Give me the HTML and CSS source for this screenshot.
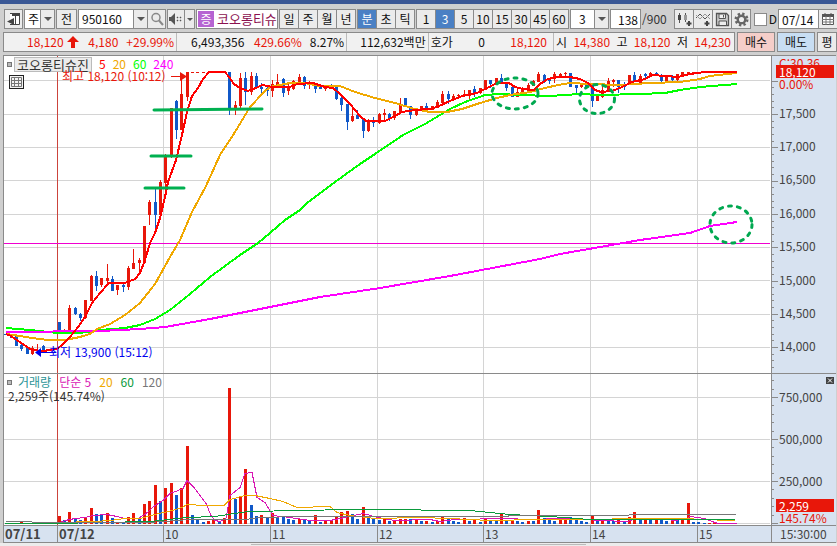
FILE: index.html
```html
<!DOCTYPE html>
<html lang="ko">
<head>
<meta charset="utf-8">
<title>코오롱티슈진 분봉 차트</title>
<link rel="stylesheet" href="styles.css">
</head>
<body>
<div class="titlebar"></div>
<header class="toolbar">
  <button class="btn w19" aria-label="패널"><svg width="14" height="14" viewBox="0 0 14 14"><path d="M3 1.500H12.500V12.500H3" fill="#fff" stroke="#444"/><path d="M5 1h8v3H5zM8 4h1v9H8zM7 6v7L0 9.500z" fill="#444"/></svg></button>
  <div class="combo w31"><select aria-label="구분"><option>주</option></select><i class="arrow"></i></div>
  <button class="btn w21">전</button>
  <div class="group">
    <div class="combo w70"><input type="text" value="950160" aria-label="종목코드"><i class="arrow"></i></div>
    <button class="btn w19" aria-label="검색"><svg width="14" height="14" viewBox="0 0 14 14"><circle cx="6" cy="5.500" r="4" fill="none" stroke="#888" stroke-width="1.500"/><path d="M9 8.500l4 4.500" stroke="#888" stroke-width="2"/></svg></button>
  </div>
  <div class="group">
    <button class="btn w18" aria-label="소리"><svg width="14" height="14" viewBox="0 0 14 14"><path d="M0 5h2L6 1v12L2 9H0z" fill="#555"/><path d="M8 5h1v1H8zM8 8h1v1H8zM11 5h1v1h-1zM11 8h1v1h-1z" stroke="#555" fill="#555" stroke-width=".5"/></svg></button>
    <button class="btn w11" aria-label="소리 목록"><i class="tri"></i></button>
  </div>
  <div class="stock"><span class="badge">증</span><span class="stock-name">코오롱티슈</span></div>
  <div class="group">
    <button class="btn w20">일</button><button class="btn w20">주</button><button class="btn w20">월</button><button class="btn w20">년</button>
  </div>
  <div class="group">
    <button class="btn w20 on">분</button><button class="btn w20">초</button><button class="btn w20">틱</button>
  </div>
  <div class="group">
    <button class="btn w20">1</button><button class="btn w20 on">3</button><button class="btn w20">5</button><button class="btn w20">10</button><button class="btn w20">15</button><button class="btn w20">30</button><button class="btn w20">45</button><button class="btn w20">60</button>
  </div>
  <div class="combo w39 num"><select aria-label="분 단위"><option>3</option></select><i class="arrow"></i></div>
  <div class="count"><input type="text" value="138" aria-label="표시 개수"><span>/900</span></div>
  <div class="group">
    <button class="btn w20" aria-label="차트 추가"><svg width="15" height="15" viewBox="0 0 15 15"><path d="M2.500 1v10M8.500 1v9" stroke="#555"/><path d="M1 3h3v5H1z" fill="#444"/><path d="M7 3h3v5H7z" fill="#999"/><path d="M12 9v5M9.500 11.500h5" stroke="#444" stroke-width="2"/></svg></button><button class="btn w20" aria-label="지표 추가"><svg width="15" height="15" viewBox="0 0 15 15"><path d="M0 6l4-4 5 5 5-5" fill="none" stroke="#555"/><path d="M0 3l4 4 5-5 5 5" fill="none" stroke="#999"/><path d="M11 9v5M8.500 11.500h5" stroke="#444" stroke-width="2"/></svg></button><button class="btn w20" aria-label="저장"><svg width="15" height="15" viewBox="0 0 15 15"><path d="M1.500 1.500h10l2 2v10h-12z" fill="#ccc" stroke="#555" stroke-width="1.300"/><path d="M4 2h6.500v4.500H4zM4 9h7.500v4.500H4z" fill="#eee" stroke="#555"/><path d="M8.500 3v2.500" stroke="#555"/></svg></button><button class="btn w20" aria-label="설정"><svg width="15" height="15" viewBox="0 0 15 15"><circle cx="7.500" cy="7.500" r="5.500" fill="none" stroke="#666" stroke-width="3" stroke-dasharray="2.200 2.120"/><circle cx="7.500" cy="7.500" r="3.800" fill="#eee" stroke="#666" stroke-width="2.500"/></svg></button>
  </div>
  <label class="check"><input type="checkbox"><span>D</span></label>
  <div class="date"><input type="text" value="07/14" aria-label="날짜"><button class="btn w20" aria-label="달력"><svg width="12" height="12" viewBox="0 0 12 12"><path d="M.5 1.500h11v10H.5z" fill="#fff" stroke="#555"/><path d="M0 1h12v3H0z" fill="#555"/><path d="M0 6.500h12M0 9h12M4 3v9M8 3v9" stroke="#777"/><path d="M3 0v2M9 0v2" stroke="#555"/></svg></button></div>
</header>

<section class="quote">
  <div class="cells">
    <div class="cell"><b class="up first">18,120</b><svg class="uparrow" width="12" height="12" viewBox="0 0 12 12"><path d="M6 0l6 6H8v6H4V6H0z" fill="#e8170a"/></svg><span class="up end">4,180</span><span class="up pct">+29.99%</span></div>
    <div class="cell"><span class="n wide">6,493,356</span><span class="up end">429.66%</span><span class="n pct">8.27%</span></div>
    <div class="cell"><span class="n end">112,632백만</span></div>
    <div class="cell book"><span>호가</span><span>0</span><span class="up">18,120</span></div>
    <div class="cell ohl"><span>시</span><span class="up">14,380</span><span>고</span><span class="up">18,120</span><span>저</span><span class="up">14,230</span></div>
  </div>
  <button class="trade buy">매수</button>
  <button class="trade sell">매도</button>
  <button class="trade avg">평</button>
</section>

<main class="chart">
  <div class="pane price">
    <svg id="price" class="plot" viewBox="4 56 767 317" preserveAspectRatio="none"></svg>
    <div class="legend"><i class="sq"></i><button class="name">코오롱티슈진</button><span class="c5">5</span><span class="c20">20</span><span class="c60">60</span><span class="c240">240</span></div>
    <button class="gridbtn" aria-label="표"><svg width="11" height="10" viewBox="0 0 11 10"><path d="M.5.500h10v9H.5zM.5 3.500h10M.5 6.500h10M3.500.500v9M7.500.500v9" fill="none" stroke="#777"/></svg></button>
    <span class="note high">최고 18,120 (10:12)</span>
    <span class="note low">최저 13,900 (15:12)</span>
  </div>
  <aside class="axis price-axis">
    <svg id="priceTicks" class="ticks" viewBox="0 56 10 317" preserveAspectRatio="none"></svg>
    <div class="now"><span class="c">C:30.36</span><b>18,120</b><span>0.00%</span></div>
    <ol><li>17,500</li><li>17,000</li><li>16,500</li><li>16,000</li><li>15,500</li><li>15,000</li><li>14,500</li><li>14,000</li></ol>
  </aside>
  <div class="pane volume">
    <svg id="volume" class="plot" viewBox="4 374 767 151" preserveAspectRatio="none"></svg>
    <div class="legend"><i class="sq"></i><span class="vt">거래량</span><span class="v5">단순 5</span><span class="c20">20</span><span class="v60">60</span><span class="v120">120</span></div>
    <div class="vol-now">2,259주(145.74%)</div>
  </div>
  <aside class="axis volume-axis">
    <svg id="volTicks" class="ticks" viewBox="0 374 10 151" preserveAspectRatio="none"></svg>
    <button class="close" aria-label="닫기"><svg width="8" height="7" viewBox="0 0 8 7"><path d="M2 1.500l4 4M6 1.500l-4 4" stroke="#fff"/></svg></button>
    <ol><li>750,000</li><li>500,000</li><li>250,000</li></ol>
    <div class="now"><b>2,259</b><span>145.74%</span></div>
  </aside>
  <div class="times"><b>07/11</b><b>07/12</b><span>10</span><span>11</span><span>12</span><span>13</span><span>14</span><span>15</span></div>
  <div class="clock">15:30:00</div>
</main>
<div class="bottom"><i></i></div>
<script src="chart.js"></script>
</body>
</html>
```
FILE: styles.css
```css
* { box-sizing: border-box; }
html, body { height: 100%; }
body {
  margin: 0; display: flex; flex-direction: column; overflow: hidden;
  background: #cfcfcf; color: #111;
  font: 12px/14px "Noto Sans CJK KR", sans-serif;
}
button, input, select { font: inherit; color: inherit; margin: 0; padding: 0; border-radius: 0; }
i { font-style: normal; }
b { font-weight: normal; }
.titlebar { height: 4px; flex: none; background: #3a5795; }

.toolbar { flex: none; height: 28px; padding: 5px 0 3px 4px; display: flex; gap: 1px; white-space: nowrap; }
.toolbar > * { flex: none; }
.group { display: flex; }
.btn { display: flex; align-items: center; justify-content: center; height: 20px; border: 1px solid #8a8a8a; background: #ebebeb; overflow: hidden; }
.group > * + * { margin-left: -1px; }
.btn.on { background: #4a80c4; color: #fff; }
.w11 { width: 11px; } .w18 { width: 18px; } .w19 { width: 19px; } .w20 { width: 20px; } .w21 { width: 21px; }
.w31 { width: 31px; } .w39 { width: 39px; } .w70 { width: 70px; }
.combo { display: flex; height: 20px; border: 1px solid #8a8a8a; background: #fff; }
.combo select, .combo input { appearance: none; flex: 1; min-width: 0; width: 0; border: 0; background: none; padding-left: 3px; outline: 0; }
.combo.num select { padding-left: 8px; }
.arrow { width: 14px; background: #ebebeb; border-left: 1px solid #8a8a8a; display: flex; align-items: center; justify-content: center; pointer-events: none; }
.arrow::after, .tri { content: ""; border: 4px solid transparent; border-top-color: #555; border-bottom: 0; }
.tri { border-width: 3px 3px 0; }
.stock { display: flex; align-items: center; width: 82px; height: 20px; border: 1px solid #8a8a8a; background: #fff; padding-left: 1px; overflow: hidden; color: #8b1150; }
.badge { width: 16px; height: 16px; line-height: 16px; text-align: center; color: #fff; background: #b663d2; margin-right: 3px; flex: none; }
.stock-name { font-size: 13px; }
.count { display: flex; align-items: center; width: 63px; color: #333; }
.count input { width: 31px; height: 20px; border: 1px solid #8a8a8a; background: #fff; text-align: right; padding-right: 2px; color: #111; margin-right: 1px; }
.check { display: flex; align-items: center; gap: 2px; width: 25px; padding-left: 2px; }
.check input { appearance: none; width: 13px; height: 13px; background: #fff; border: 1px solid #8a8a8a; }
.date { display: flex; }
.date input { width: 40px; height: 20px; border: 1px solid #8a8a8a; border-right: 0; background: #fff; padding-left: 3px; }

.quote { flex: none; height: 20px; display: flex; gap: 2px; padding-left: 3px; line-height: 18px; }
.cells { flex: 1; display: grid; grid-template-columns: 173fr 171fr 82fr 126fr 182fr; border: 1px solid #8a8a8a; background: #f1f1f1; }
.cell { display: flex; align-items: center; min-width: 0; padding: 0 2px; white-space: nowrap; }
.cell + .cell { border-left: 1px solid #bbb; }
.up { color: #e8170a; }
.cell .end { margin-left: auto; }
.pct { margin-left: 8px; }
.first { margin-left: 21px; }
.uparrow { margin-left: 3px; }
.wide { margin-left: 12px; }
.book, .ohl { justify-content: space-between; }
.book { padding-right: 6px; }
.ohl { padding-right: 3px; }
.trade { border: 1px solid #8a8a8a; line-height: 16px; height: 20px; }
.buy { width: 38px; background: #f5cec9; }
.sell { width: 38px; background: #c8def3; }
.avg { width: 20px; background: #ebebeb; }

.chart {
  flex: 1; min-height: 0; margin: 3px 1px 0 3px; border: 1px solid #8a8a8a; border-right: 0; border-bottom: 0; background: #fff;
  display: grid; grid-template-columns: 1fr 65px; grid-template-rows: 318fr 151fr 18px;
}
.pane { position: relative; min-height: 0; min-width: 0; overflow: hidden; }
.price, .price-axis { border-bottom: 1px solid #8a8a8a; }
.plot { position: absolute; inset: 0; width: 100%; height: 100%; }
.legend { position: relative; display: flex; align-items: center; padding-left: 3px; height: 16px; }
.sq { width: 5px; height: 5px; background: #bbb; border: 1px solid #777; }
.name { margin-left: 2px; width: 78px; height: 15px; line-height: 13px; font-size: 13px; border: 1px solid #bbb; background: #ececec; color: #333; }
.price .legend span { margin-left: 7px; }
.c5 { color: #f00; } .c20 { color: #f0a800; } .c60 { color: #0f0; } .c240 { color: #f0f; }
.vt { color: #2a9496; } .v5 { color: #d916b4; } .v60 { color: #0a9a3c; } .v120 { color: #777; }
.volume .legend { gap: 8px; } .volume .sq { margin-right: -2px; }
.vol-now { position: relative; padding-left: 4px; line-height: 11px; color: #333; }
.gridbtn { position: absolute; left: 5px; top: 19px; width: 15px; height: 14px; background: #f4f4f4; border: 1px solid #222; display: flex; align-items: center; justify-content: center; }
.note { position: absolute; white-space: nowrap; }
.high { left: 58px; top: 13px; color: #e8170a; }
.low { left: 45px; top: 289px; color: #00e; }

.axis { position: relative; background: #d7e2f0; color: #444; border-left: 1px solid #8a8a8a; display: flex; flex-direction: column; min-height: 0; overflow: hidden; }
.ticks { position: absolute; left: 0; top: 0; width: 10px; height: 100%; }
.axis ol { list-style: none; margin: 0; padding: 0 0 0 7px; flex: 1; display: flex; flex-direction: column; }
.axis li { flex: 1; display: flex; align-items: center; }
.price-axis ol { padding-top: 40px; padding-bottom: 10px; }
.volume-axis ol { padding-top: 2px; padding-bottom: 23px; }
.now { position: absolute; left: 4px; right: 2px; display: flex; flex-direction: column; color: #e8170a; line-height: 12px; }
.now b { background: #e8170a; color: #fff; padding-left: 3px; line-height: 13px; z-index: 1; }
.now span { padding-left: 3px; }
.price-axis .now { top: 1px; }
.now .c { height: 8px; }
.volume-axis .now { bottom: 1px; }
.close { position: absolute; right: 2px; top: 3px; width: 8px; height: 7px; background: #444; border: 0; display: flex; }
.times { display: grid; grid-template-columns: 53fr 106fr 107fr 107fr 106fr 107fr 107fr 74fr; background: #d7e2f0; color: #444; border: solid #8a8a8a; border-width: 1px 0; line-height: 15px; }
.times > * { padding-left: 1px; min-width: 0; }
.times > * + * { border-left: 1px solid #8a8a8a; }
.times b { font-weight: bold; font-size: 13px; }
.clock { background: #d7e2f0; border: 1px solid #8a8a8a; border-right: 0; padding-left: 8px; line-height: 15px; color: #444; }
.bottom { flex: none; height: 3px; background: #ececec; display: flex; justify-content: center; }
.bottom i { width: 40%; border-top: 1px solid #bbb; margin-top: 1px; }
```
FILE: chart.js
```js
const NS = 'http://www.w3.org/2000/svg';
const RED = '#e8170a', BLUE = '#1058c8', GRID = '#d4d4d4';
const hours = [163.5, 270.5, 377.5, 483.5, 590.5, 697.5];

function add(svg, tag, attrs) {
  const el = document.createElementNS(NS, tag);
  for (const k in attrs) el.setAttribute(k, attrs[k]);
  svg.appendChild(el);
}
const rect = (s, x, y, w, h, fill) => add(s, 'rect', { x, y, width: w, height: h, fill });
const line = (s, pts, stroke, w) => add(s, 'polyline', {
  points: pts, fill: 'none', stroke, 'stroke-width': w, 'stroke-linejoin': 'round', 'shape-rendering': 'crispEdges'
});
const barX = i => Math.floor(59.2 + 5.33 * i);

// Each candle: colour, wick top, body top, body bottom, wick bottom. The first ten are the previous day.
const candles = `b334,334,335,335 b334,334,338,338 b336,336,346,346 b344,345,349,351 b347,347,354,354 r346,348,354,355 r344,350,351,353 b345,346,351,352 b349,349,351,351 r348,349,350,351
b322,322,331,331 r329,330,332,333 r305,308,332,334 b307,308,314,315 b313,314,318,321 r300,300,318,319 r275,276,301,301 b271,276,286,291 r278,278,285,287 r264,278,281,283
b276,279,291,291 r285,285,290,295 b283,285,287,292 r266,268,287,290 r249,263,269,269 r258,260,263,273 r226,226,263,263 r200,202,215,225 b189,202,215,233 r180,182,215,215
r154,156,183,187 r108,108,156,158 b100,101,130,139 r78,94,130,130 r72,72,97,101 r72,72,73,73 r72,72,73,73 r72,72,73,73 r72,72,73,73 r72,72,73,73
r72,72,73,73 r72,72,73,73 b72,72,108,115 r101,105,109,115 r73,78,106,108 b72,78,92,105 r72,76,92,95 b73,76,87,89 b83,87,89,95 b85,88,91,96
r80,84,91,97 r74,82,87,87 b78,79,93,97 r84,86,91,95 r80,81,89,90 r74,77,82,82 b76,77,86,89 r81,84,85,89 b84,84,89,93 b84,87,89,89
r85,85,89,91 b84,86,87,88 b86,86,99,100 b96,98,105,111 b104,104,122,130 r108,116,121,122 b110,115,119,119 b118,118,131,138 r119,120,131,132 b117,120,123,127
r113,114,123,124 r109,113,115,120 b113,114,119,121 r111,111,118,120 r98,104,113,114 b98,98,106,107 b106,106,115,119 r110,110,115,116 r106,106,111,111 b103,106,110,110
r106,106,110,110 r100,102,108,108 r91,94,103,103 b91,94,99,104 r94,96,99,99 r94,95,96,97 r90,94,96,97 r90,90,96,99 b86,89,94,97 r88,88,93,94
r80,80,90,90 b80,80,84,88 r78,78,84,85 b74,78,83,83 b83,83,88,91 b86,87,97,97 r89,92,97,97 r87,90,92,92 r83,85,91,91 r80,81,86,86
r72,74,82,82 b74,75,81,83 b78,80,81,84 r72,74,79,83 r73,74,77,78 r72,73,74,77 b73,73,87,87 b85,85,88,95 r83,84,87,88 b84,84,87,87
b85,85,101,107 r94,96,101,101 r86,90,97,98 r78,81,91,92 r79,80,82,87 b80,80,87,93 b82,85,87,90 r75,75,83,83 b72,75,82,82 r74,76,83,83
b73,74,76,80 r72,73,77,77 b72,73,75,76 b74,75,81,84 r76,77,81,83 b75,76,80,81 r74,74,80,81 r72,72,75,76 r72,72,74,74 r72,72,73,73
r72,72,73,73 r72,72,73,73 r72,72,73,73 r72,72,73,73 r72,72,73,73 r72,72,73,73 r72,72,73,73`.split(/\s+/);

const volumes = `r516 b520 r512 b518 b520 r517 r508 b514 b514 r513 b518 r522 b522 r517 r513 b518 r504 r501 r485 b501
r488 r483 b495 r488 r446 b515 b520 b522 r521 r519 b521 r518 r388 b499 r497 r469 b505 b516 r515 b518
r513 b518 b517 b519 b520 r519 b519 b521 r515 b522 r521 r521 r517 r512 r511 b514 b519 r507 b518 b519
b520 r518 b521 r520 r519 r519 b519 r519 b521 r521 b522 r521 r516 b519 b521 b522 r518 b521 r519 b522
r518 b521 b521 r514 b521 r520 b521 b522 r521 b521 r510 b518 b519 b521 r519 r517 b517 b519 b521 b522
r515 b521 r519 b519 b521 r519 b521 r517 r512 b519 r519 b519 r519 b519 b521 r519 b519 r520 r503 b522
b522 b523 r523 r522 r523 r523 r523`.split(/\s+/);

const p = document.getElementById('price');
for (const y of [80, 114, 147, 180, 214, 247, 280, 314, 347]) rect(p, 4, y, 766, 1, GRID);
for (const x of hours) rect(p, x - .5, 56, 1, 317, GRID);
rect(p, 57, 56, 1, 317, '#cc443c');
rect(p, 4, 243, 766, 1, '#f000d0');
candles.forEach((c, n) => {
  const color = c[0] === 'r' ? RED : BLUE;
  const [a, b, d, e] = c.slice(1).split(',').map(Number);
  const x = barX(n - 10);
  rect(p, x, a, 1, e - a, color);
  rect(p, x - 1, b, 3, d - b, color);
});
line(p, '6,328 30,330 57,333 80,333 100,330 125,328 140,325 155,319 170,310 190,294 210,277 240,255 258,243 270,233 285,220 300,210 307,203 335,182 360,164 375,154 403,135 425,124 450,109 465,102 485,95 500,94 520,95 550,96 580,94 600,95 640,94 665,93 680,90 700,87 737,84', '#0f0', 2);
line(p, '6,332 100,331 140,329 165,327 210,319 240,313 270,307 320,297 380,288 450,276 540,259 560,254 600,247 640,240 690,233 710,226 737,222', '#f0f', 2);
line(p, '6,334 20,336 32,338 48,340 65,340 80,337 90,334 97,329 110,324 125,315 140,303 155,284 170,257 180,240 192,212 206,186 220,155 235,132 250,107 264,92 270,87 290,83 305,83 320,86 340,86 355,92 375,98 395,103 415,109 430,112 447,112 462,109 480,103 497,98 510,95 530,92 545,88 558,85 570,83 590,84 620,85 650,83 680,82 700,79 710,76 737,73', '#f0a800', 2);
line(p, '6,334 11,336 21,343 32,350 43,351 57,349 62,345 70,337 78,327 85,317 92,303 100,293 109,283 125,283 135,279 140,273 145,260 150,243 155,233 160,218 165,197 168,182 176,160 182,135 187,112 192,96 198,88 203,79 209,72 225,72 229,77 234,84 240,88 248,91 256,88 262,85 273,87 290,87 297,84 313,83 325,87 333,88 340,94 350,104 360,116 366,121 385,121 395,116 402,112 415,110 430,109 437,107 450,101 462,96 477,93 487,88 497,83 509,83 515,87 523,89 534,90 540,84 548,79 558,77 570,77 580,79 588,83 595,90 601,92 612,91 622,87 632,82 645,79 652,75 665,76 678,77 690,74 705,72 737,72', '#f00', 2);
// Marker arrows for the day's high and low
add(p, 'path', { d: 'M171 76h9v-4l7 4.500l-7 4.500v-4h-9z', fill: RED });
add(p, 'path', { d: 'M56 352H41v-4l-6 4.500l6 4.500v-4h15z', fill: '#00e' });
// Hand-drawn support levels
for (const [x1, y1, x2, y2] of [[154, 110, 262, 109], [151, 156, 191, 156], [145, 188, 184, 188]]) {
  add(p, 'line', { x1, y1, x2, y2, stroke: '#00b050', 'stroke-width': 3, 'stroke-linecap': 'round' });
}
for (const [cx, cy, rx, ry] of [[515, 93.5, 23, 15.5], [597, 99, 17.5, 14.5], [731, 224.5, 21, 18.500]]) {
  add(p, 'ellipse', { cx, cy, rx, ry, fill: 'none', stroke: '#00a850', 'stroke-width': 3, 'stroke-dasharray': '3 6', 'stroke-linecap': 'round' });
}

const v = document.getElementById('volume');
for (const y of [397, 439, 481, 523]) rect(v, 4, y, 766, 1, GRID);
for (const x of hours) rect(v, x - .5, 374, 1, 151, GRID);
volumes.forEach((c, i) => {
  const y = +c.slice(1);
  rect(v, barX(i) - 1, y, 3, 524 - y, c[0] === 'r' ? RED : BLUE);
});
rect(v, 20, 521, 3, 2, RED);
rect(v, 57, 374, 1, 151, '#cc443c');
// Half-pixel shift keeps the one-pixel average lines on whole rows
const vline = (pts, color) => line(v, pts.replace(/,(\d+)/g, ',$1.5'), color, 1);
vline('57,523 65,520 75,518 85,517 93,515 107,514 117,516 125,518 138,518 145,514 155,505 163,500 170,493 178,490 183,488 187,480 194,487 200,495 206,503 211,515 215,520 220,521 226,518 230,495 240,487 245,473 252,472 257,497 265,502 273,515 290,517 310,520 330,520 345,517 363,513 378,517 395,520 430,519 440,521 455,519 505,518 530,519 563,518 585,519 600,520 628,521 635,518 658,518 675,520 687,518 690,516 705,518 712,521 718,523 737,523', '#d916b4');
vline('57,522 95,521 110,520 125,518 140,518 155,514 172,510 182,507 187,504 205,505 224,505 230,499 245,495 255,495 270,498 283,501 297,507 330,506 337,512 350,515 375,518 420,517 450,518 490,520 540,519 585,519 640,518 690,518 697,519 735,520', '#f0a800');
vline('5,523 57,523 100,522 150,521 187,517 215,516 228,514 248,511 300,510 350,509 420,509 422,510 470,510 490,512 510,514 550,516 590,519 735,519', '#0a9a3c');
vline('6,521 57,522 150,522 190,519 245,519 260,517 300,516 440,516 580,515 628,515 630,514 736,514', '#777');

const pt = document.getElementById('priceTicks');
for (let k = -5; k < 40; k++) rect(pt, 0, Math.round(114 + k * 6.66), k % 5 ? 2 : 6, 1, '#8a8a8a');
const vt = document.getElementById('volTicks');
for (let k = -2; k < 16; k++) rect(vt, 0, Math.round(397 + k * 8.4), k % 5 ? 2 : 6, 1, '#8a8a8a');
```
